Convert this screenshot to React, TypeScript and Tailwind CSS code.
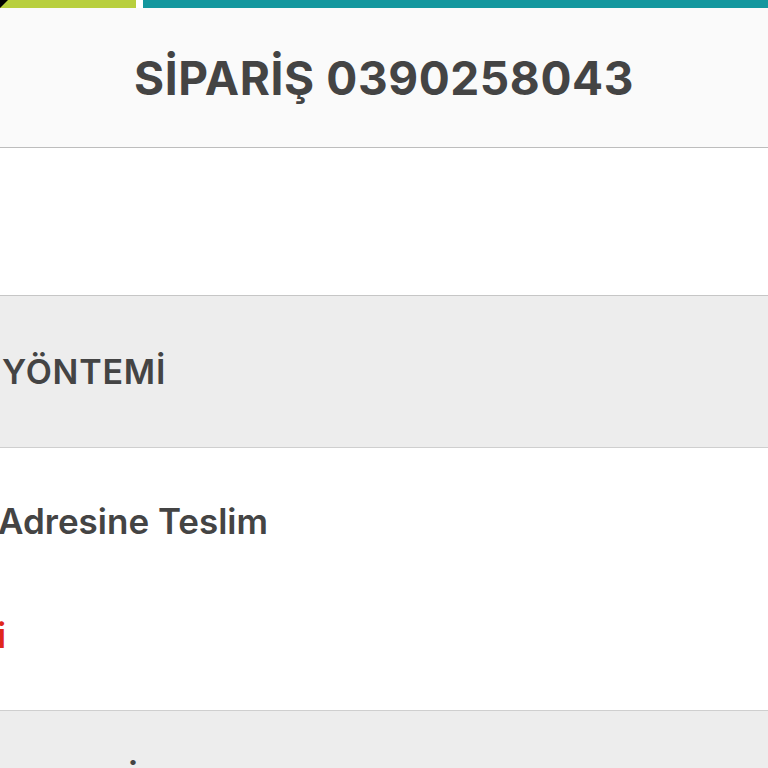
import React from 'react';

export default function App() {
  return (
    <div className="w-[768px] h-[768px] overflow-hidden bg-white font-['Inter','Noto_Sans',sans-serif] text-[#444]">
      {/* Top colour strip */}
      <div className="relative flex h-[8px]">
        <div className="w-[136px] bg-[#b8cf3e]" />
        <div className="w-[7px] bg-white" />
        <div className="flex-1 bg-[#13979e]" />
        <div className="absolute left-0 top-0 h-0 w-0 border-t-[8px] border-r-[8px] border-t-black border-r-transparent" />
      </div>

      {/* Header */}
      <header className="flex h-[140px] items-center justify-center border-b border-[#bdbdbd] bg-[#fafafa]">
        <h1 className="pt-[2px] text-[46px] font-bold tracking-[0.6px] text-[#444]">SİPARİŞ 0390258043</h1>
      </header>

      {/* Empty block */}
      <div className="h-[148px] border-b border-[#c6c6c6] bg-white" />

      {/* Section title */}
      <section className="flex h-[152px] items-center border-b border-[#cfcfcf] bg-[#ededed] pl-[2px]">
        <span className="text-[34px] font-semibold tracking-[0.8px]">YÖNTEMİ</span>
      </section>

      {/* Delivery */}
      <section className="h-[263px] overflow-hidden border-b border-[#cfcfcf] bg-white pt-[47px]">
        <div className="-ml-[2px] text-[35px] font-semibold leading-[1.5]">Adresine Teslim</div>
        <div className="-ml-[3px] mt-[66px] text-[35px] font-semibold leading-[1.2] text-[#e0261b]">i</div>
      </section>

      {/* Next section */}
      <section className="h-[60px] bg-[#ededed] pl-[128px] pt-[52px]">
        <span className="text-[36px] font-semibold leading-none">İ</span>
      </section>
    </div>
  );
}
